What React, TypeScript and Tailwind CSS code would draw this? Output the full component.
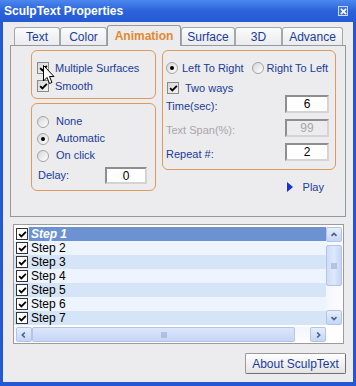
import React from 'react';

const font = "font-['Liberation_Sans',Arial,sans-serif]";

function Tick() {
  return (
    <svg viewBox="0 0 12 12" className="w-[9px] h-[9px]">
      <path d="M1.5 5.5 L4.5 8.5 L10.5 2.5" fill="none" stroke="#000" strokeWidth="2.4" />
    </svg>
  );
}

function CheckBox({ gray = false }: { gray?: boolean }) {
  return (
    <span
      className={
        gray
          ? 'w-[12px] h-[12px] shrink-0 border border-[#8a8a8a] bg-gradient-to-br from-[#d8d8d8] to-[#f4f4f4] flex items-center justify-center'
          : 'w-[12px] h-[12px] shrink-0 border border-[#333] bg-white flex items-center justify-center'
      }
    >
      <Tick />
    </span>
  );
}

function Radio({ on = false }: { on?: boolean }) {
  return (
    <span className="w-[12px] h-[12px] shrink-0 rounded-full border border-[#a4a4a4] bg-gradient-to-br from-[#d6d6d6] to-white flex items-center justify-center">
      {on && <span className="w-[4px] h-[4px] rounded-full bg-black" />}
    </span>
  );
}

function Field({ value, w = 44, disabled = false }: { value: string; w?: number; disabled?: boolean }) {
  return (
    <div
      className={
        (w === 44 ? 'w-[44px] h-[18px] ' : 'w-[42px] h-[17px] ') +
        'border-2 border-t-[#8e8e8e] border-l-[#8e8e8e] border-r-[#d4d4d4] border-b-[#d4d4d4] flex items-center justify-center text-[12px] ' +
        (disabled ? 'bg-[#ecebee] text-[#a8a8a8]' : 'bg-white text-black')
      }
    >
      {value}
    </div>
  );
}

function ScrollBtn({ dir }: { dir: 'up' | 'down' | 'left' | 'right' }) {
  const d = {
    up: 'M3 7 L6 4 L9 7',
    down: 'M3 5 L6 8 L9 5',
    left: 'M7 3 L4 6 L7 9',
    right: 'M5 3 L8 6 L5 9',
  }[dir];
  return (
    <div className="w-[16px] h-[15px] shrink-0 rounded-[2px] border border-[#b3c4e8] bg-gradient-to-b from-[#e6eefc] to-[#c4d5f6] flex items-center justify-center">
      <svg viewBox="0 0 12 12" className="w-[10px] h-[10px]">
        <path d={d} fill="none" stroke="#4d6185" strokeWidth="2" />
      </svg>
    </div>
  );
}

const tabs = [
  { t: 'Text', w: 'w-[46px]' },
  { t: 'Color', w: 'w-[47px]' },
  { t: 'Animation', w: 'w-[74px]', on: true },
  { t: 'Surface', w: 'w-[54px]' },
  { t: '3D', w: 'w-[47px]' },
  { t: 'Advance', w: 'w-[61px]' },
];

const steps = ['Step 1', 'Step 2', 'Step 3', 'Step 4', 'Step 5', 'Step 6', 'Step 7'];

export default function App() {
  return (
    <div className={`w-[356px] h-[386px] flex flex-col bg-[#2458d4] overflow-hidden ${font} text-[11px] text-[#1a3c96]`}>
      <div className="h-[22px] shrink-0 flex items-center justify-between pl-[4px] pr-[8px] bg-gradient-to-b from-[#4c88ee] via-[#2c62da] to-[#245ad3]">
        <span className="text-white font-bold text-[12px]">SculpText Properties</span>
        <div className="w-[10px] h-[10px] border border-[#c9d8f8] bg-[#3f72de] flex items-center justify-center">
          <svg viewBox="0 0 8 8" className="w-[7px] h-[7px]">
            <path d="M1 1 L7 7 M7 1 L1 7" stroke="#fff" strokeWidth="1.8" />
          </svg>
        </div>
      </div>

      <div className="flex-1 mx-[3px] mb-[4px] bg-[#ecebee] flex flex-col">
        {/* tab strip */}
        <div className="h-[23px] pt-[3px] pl-[11px] flex items-end">
          {tabs.map((tab) =>
            tab.on ? (
              <div
                key={tab.t}
                className={`${tab.w} h-[21px] -mb-[1px] relative z-10 bg-[#ecebee] border border-b-0 border-[#919b9c] rounded-t-[3px] flex items-center justify-center font-bold text-[12px] text-[#e3892f]`}
              >
                {tab.t}
              </div>
            ) : (
              <div
                key={tab.t}
                className={`${tab.w} h-[18px] bg-gradient-to-b from-[#fbfbfc] to-[#ebeaee] border border-b-0 border-[#a3a8ad] rounded-t-[3px] flex items-center justify-center text-[12px]`}
              >
                {tab.t}
              </div>
            )
          )}
        </div>

        {/* tab panel */}
        <div className="ml-[7px] w-[336px] h-[172px] border border-[#919b9c] flex pl-[20px] pt-[4px] gap-[6px]">
          <div className="w-[125px] flex flex-col gap-[4px]">
            <div className="relative h-[49px] border border-[#dc9b5c] rounded-[6px] pl-[5px] pt-[8px] flex flex-col">
              <div className="h-[18px] flex items-center gap-[6px]">
                <CheckBox gray />
                <span>Multiple Surfaces</span>
              </div>
              <div className="h-[18px] flex items-center gap-[6px]">
                <CheckBox gray />
                <span>Smooth</span>
              </div>
              <svg viewBox="0 0 12 20" className="absolute left-[11px] top-[14px] w-[12px] h-[20px]">
                <path d="M0.5 0.5 L0.5 16 L4 12.5 L6.5 18.5 L9 17.5 L6.5 11.5 L11 11.5 Z" fill="#fff" stroke="#000" strokeWidth="1" />
              </svg>
            </div>
            <div className="h-[88px] border border-[#dc9b5c] rounded-[6px] pl-[5px] pt-[9px] flex flex-col">
              <div className="h-[17px] flex items-center gap-[7px]">
                <Radio />
                <span>None</span>
              </div>
              <div className="h-[17px] flex items-center gap-[7px]">
                <Radio on />
                <span>Automatic</span>
              </div>
              <div className="h-[17px] flex items-center gap-[7px]">
                <Radio />
                <span>On click</span>
              </div>
              <div className="mt-[3px] flex items-center">
                <span className="w-[68px] pl-[1px]">Delay:</span>
                <Field value="0" w={42} />
              </div>
            </div>
          </div>

          <div className="w-[174px] flex flex-col">
            <div className="h-[120px] border border-[#dc9b5c] rounded-[6px] pl-[3px] pr-[6px] pt-[8px] flex flex-col">
              <div className="h-[18px] flex items-center">
                <Radio on />
                <span className="ml-[4px]">Left To Right</span>
                <span className="ml-[8px]">
                  <Radio />
                </span>
                <span className="ml-[3px]">Right To Left</span>
              </div>
              <div className="mt-[3px] h-[16px] flex items-center gap-[6px] pl-[1px]">
                <CheckBox gray />
                <span>Two ways</span>
              </div>
              <div className="-mt-[1px] h-[18px] flex items-end justify-between">
                <span className="leading-[13px]">Time(sec):</span>
                <Field value="6" />
              </div>
              <div className="mt-[6px] h-[18px] flex items-end justify-between">
                <span className="leading-[13px] text-[#a8a8a8]">Text Span(%):</span>
                <Field value="99" disabled />
              </div>
              <div className="mt-[6px] h-[18px] flex items-end justify-between">
                <span className="leading-[13px]">Repeat #:</span>
                <Field value="2" />
              </div>
            </div>
            <div className="mt-[10px] h-[14px] flex items-center justify-end gap-[10px] pr-[12px]">
              <svg viewBox="0 0 6 10" className="w-[6px] h-[10px]">
                <path d="M0 0 L6 5 L0 10 Z" fill="#1c30d4" />
              </svg>
              <span>Play</span>
            </div>
          </div>
        </div>

        {/* steps list */}
        <div className="mt-[7px] ml-[10px] w-[331px] h-[120px] border border-[#9c9c9c] bg-white pt-[2px] flex flex-col">
          <div className="h-[98px] flex">
            <div className="flex-1 flex flex-col text-black">
              {steps.map((s, i) => (
                <div key={s} className={`h-[14px] flex items-center ${i % 2 === 1 ? 'bg-[#eef4fd]' : 'bg-[#d6e4f7]'}`}>
                  <div className={`h-[14px] w-[14px] shrink-0 flex items-center justify-end ${i === 0 ? 'bg-white' : ''}`}>
                    <CheckBox />
                  </div>
                  {i === 0 ? (
                    <div className="flex-1 h-[14px] ml-[1px] pl-[2px] bg-[#6c92d2] text-white italic font-bold text-[12px] flex items-center">
                      {s}
                    </div>
                  ) : (
                    <span className="pl-[3px] text-[12px]">{s}</span>
                  )}
                </div>
              ))}
            </div>
            <div className="w-[17px] flex flex-col bg-gradient-to-r from-[#f3f6fd] to-[#fdfdff]">
              <ScrollBtn dir="up" />
              <div className="mt-[3px] w-[16px] h-[41px] rounded-[2px] border border-[#b3c4e8] bg-gradient-to-r from-[#cddcf8] via-[#dfe8fb] to-[#c6d6f6] flex items-center justify-center">
                <svg viewBox="0 0 8 8" className="w-[8px] h-[8px]">
                  <path d="M1 2 H7 M1 4 H7 M1 6 H7" stroke="#8da2cb" strokeWidth="1" />
                </svg>
              </div>
              <div className="flex-1" />
              <ScrollBtn dir="down" />
            </div>
          </div>
          <div className="mt-[2px] h-[15px] flex">
            <div className="flex-1 pl-[2px] flex bg-gradient-to-b from-[#f3f6fd] to-[#fdfdff]">
              <ScrollBtn dir="left" />
              <div className="w-[263px] h-[15px] rounded-[2px] border border-[#b3c4e8] bg-gradient-to-b from-[#dce6fb] to-[#c6d6f6] flex items-center justify-center">
                <svg viewBox="0 0 8 8" className="w-[8px] h-[8px]">
                  <path d="M2 1 V7 M4 1 V7 M6 1 V7" stroke="#8da2cb" strokeWidth="1" />
                </svg>
              </div>
              <div className="flex-1" />
              <ScrollBtn dir="right" />
            </div>
            <div className="w-[17px]" />
          </div>
        </div>

        <div className="mt-[9px] mr-[7px] self-end w-[101px] h-[21px] rounded-[2px] border border-[#9a9a9a] border-b-[#707070] border-r-[#707070] bg-gradient-to-b from-white to-[#e4e3e6] flex items-center justify-center text-[12px]">
          About SculpText
        </div>
      </div>
    </div>
  );
}
